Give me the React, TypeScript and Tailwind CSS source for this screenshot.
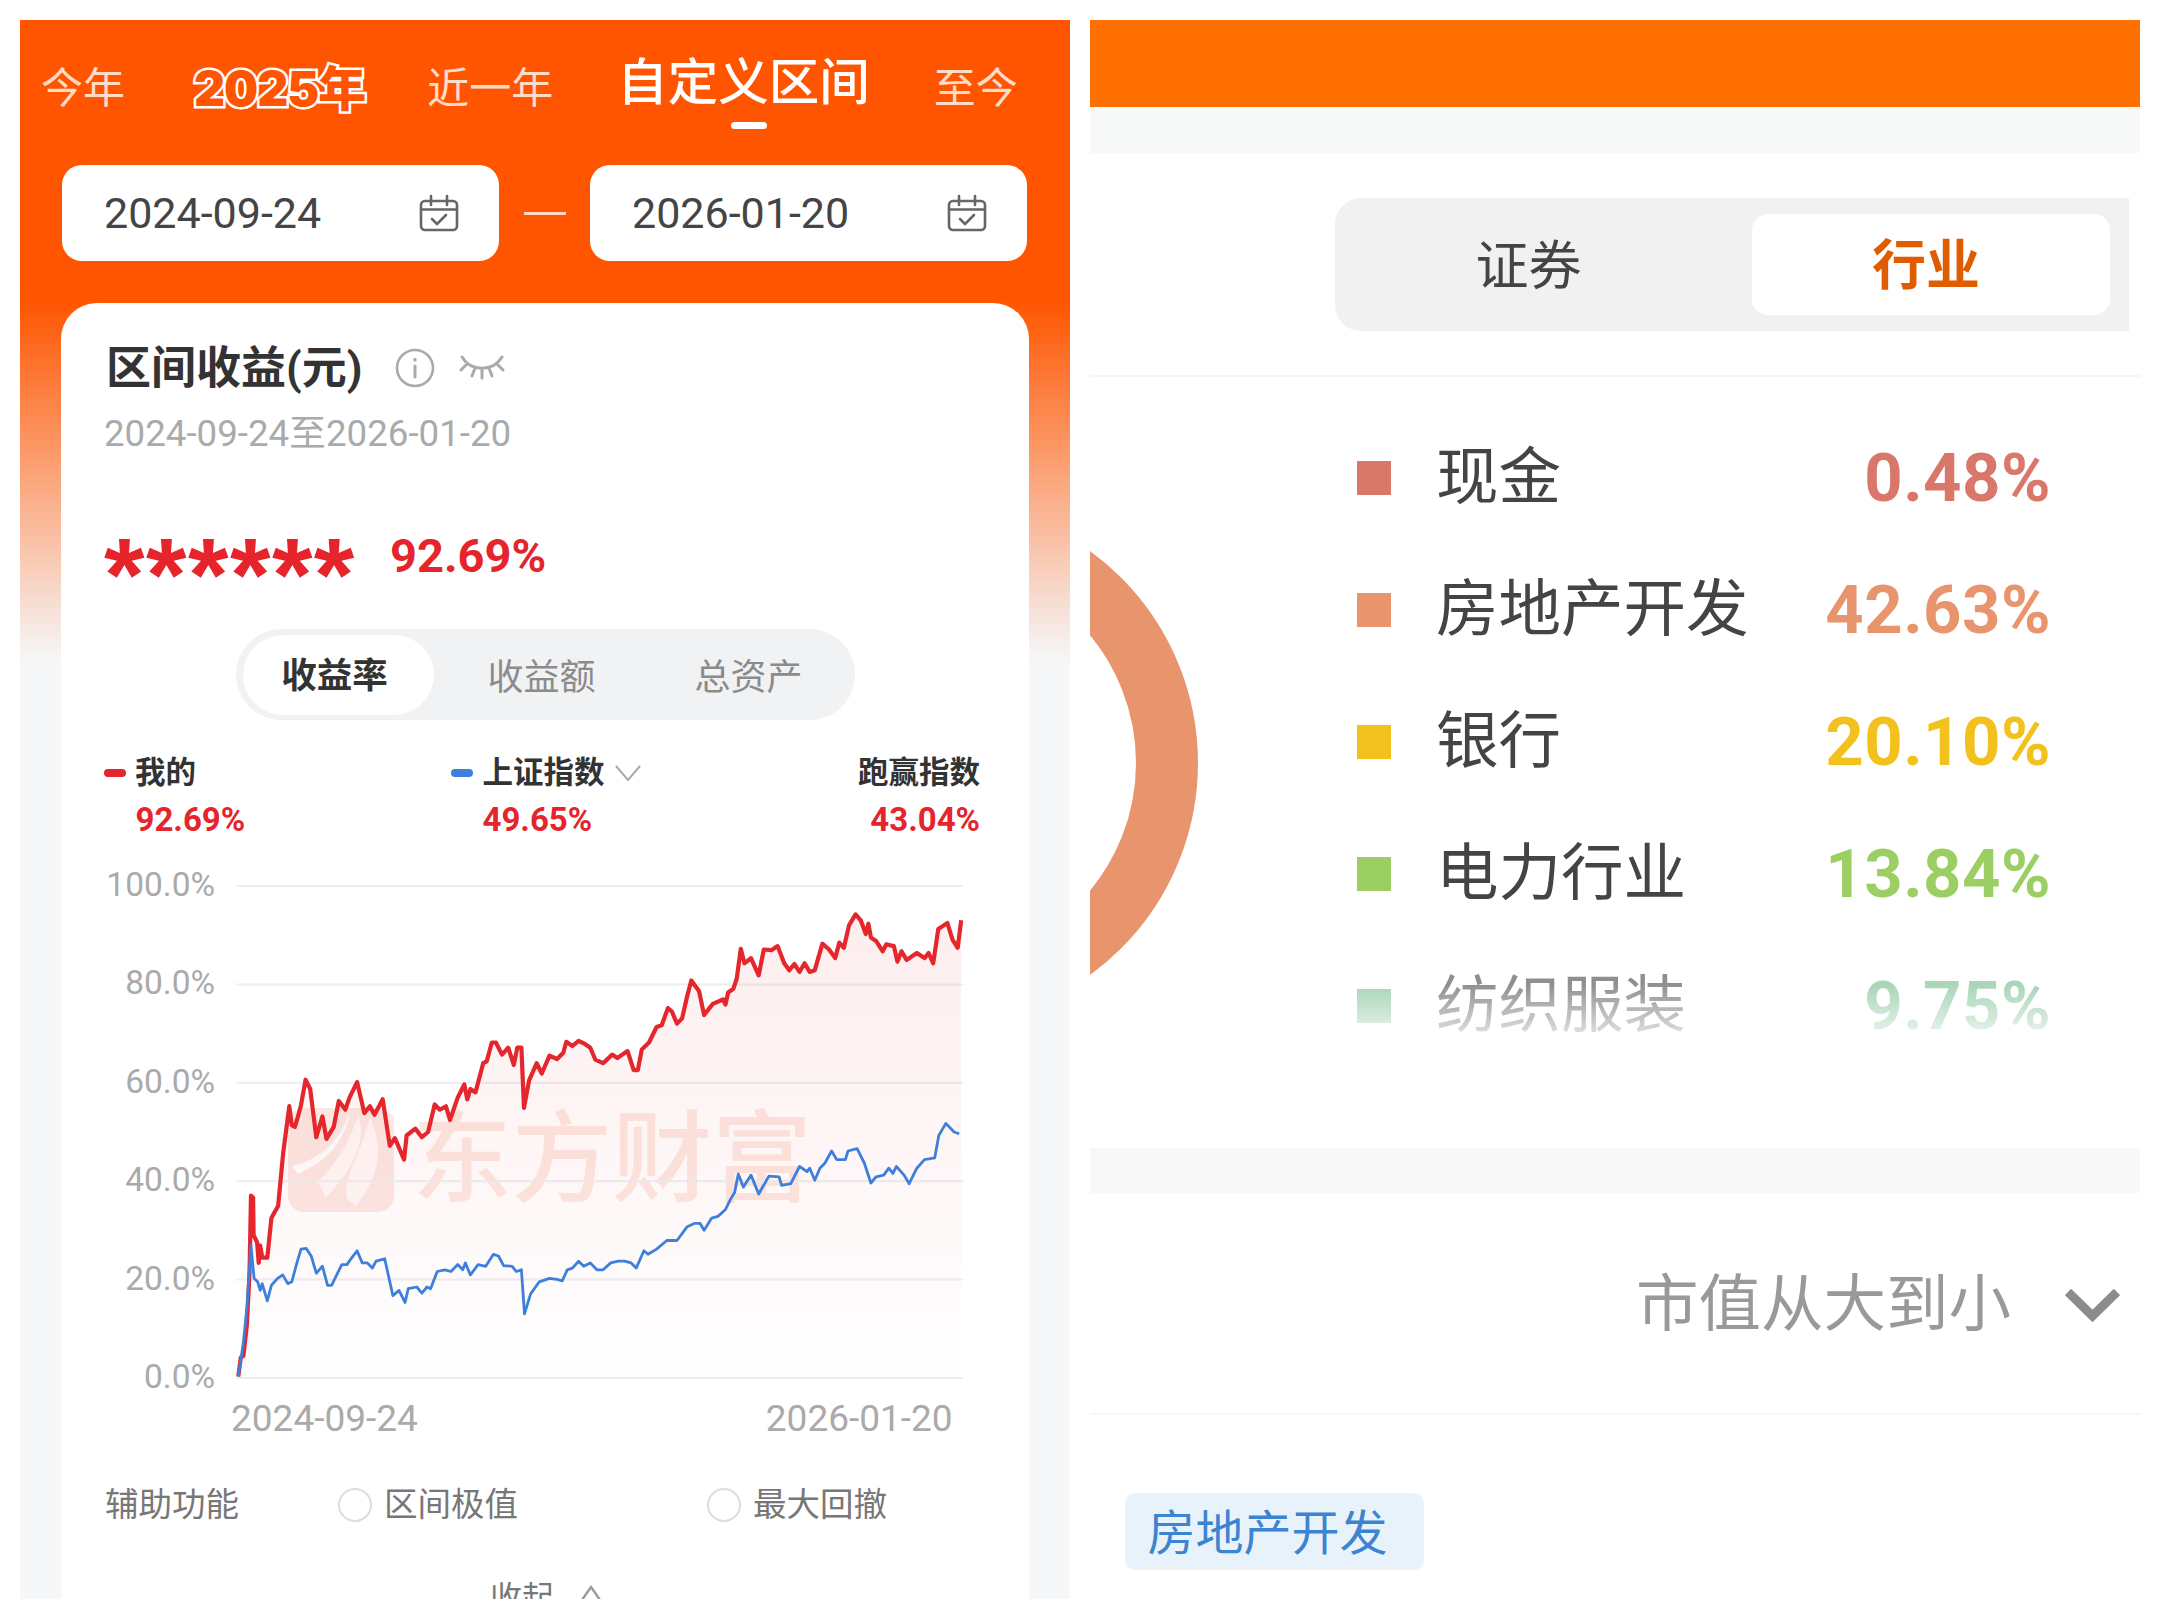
const redTrace = [
  [75,1500],[80,1445],[85,1440],[92,1350],[97,1200],[100,975],[104,980],[105,1090],[112,1110],[115,1170],[118,1120],[122,1155],[132,1155],[140,1040],[153,1005],[163,850],[175,715],[180,770],[186,775],[192,745],[198,712],[207,638],[216,665],[228,805],[240,745],[248,810],[262,775],[272,700],[285,725],[293,690],[308,645],[322,735],[333,715],[342,740],[358,695],[372,830],[382,808],[400,870],[405,800],[422,780],[435,805],[447,790],[460,710],[470,725],[482,715],[490,755],[505,690],[518,652],[524,695],[530,665],[540,675],[555,590],[562,585],[572,530],[580,530],[592,565],[604,545],[615,595],[622,545],[630,545],[635,720],[645,640],[660,590],[670,620],[685,568],[700,578],[712,560],[718,528],[730,540],[742,525],[755,535],[765,545],[775,580],[790,590],[808,565],[818,575],[838,555],[850,610],[858,610],[866,550],[880,530],[895,485],[905,480],[917,430],[925,440],[935,475],[945,460],[955,395],[963,350],[978,380],[988,450],[1005,418],[1025,405],[1030,420],[1035,385],[1045,375],[1052,345],[1060,258],[1067,300],[1080,285],[1095,335],[1105,260],[1120,262],[1132,250],[1145,300],[1155,320],[1165,302],[1175,325],[1185,300],[1195,325],[1205,320],[1220,243],[1233,260],[1245,285],[1253,240],[1262,255],[1272,190],[1285,158],[1295,175],[1305,215],[1310,185],[1315,225],[1325,235],[1338,265],[1345,245],[1360,250],[1367,295],[1375,265],[1385,290],[1405,270],[1420,285],[1428,270],[1437,300],[1447,200],[1465,183],[1475,232],[1485,255],[1492,175],
];

const blueTrace = [
  [75,1500],[85,1400],[92,1300],[100,1120],[106,1215],[113,1225],[118,1250],[122,1230],[132,1280],[140,1235],[152,1215],[162,1205],[172,1230],[180,1225],[190,1170],[198,1130],[208,1128],[218,1150],[228,1200],[240,1180],[250,1235],[258,1235],[268,1205],[278,1175],[288,1175],[295,1160],[308,1135],[318,1170],[328,1170],[338,1185],[345,1165],[362,1158],[378,1265],[390,1250],[402,1285],[408,1245],[425,1240],[435,1258],[445,1240],[452,1245],[465,1195],[480,1190],[492,1195],[505,1175],[515,1190],[520,1170],[530,1205],[545,1175],[560,1180],[575,1145],[585,1150],[595,1178],[612,1180],[620,1195],[630,1190],[636,1318],[648,1260],[665,1225],[685,1215],[700,1218],[710,1222],[720,1190],[730,1185],[742,1165],[752,1180],[765,1170],[778,1190],[790,1190],[805,1170],[820,1165],[832,1165],[845,1170],[855,1185],[870,1135],[878,1145],[895,1130],[915,1105],[935,1105],[955,1065],[970,1055],[980,1055],[988,1075],[1003,1040],[1015,1035],[1030,1015],[1040,985],[1048,965],[1055,912],[1065,950],[1080,915],[1095,970],[1115,918],[1135,920],[1140,945],[1158,940],[1175,890],[1190,905],[1195,895],[1205,930],[1215,895],[1225,880],[1238,845],[1248,870],[1265,870],[1270,845],[1288,838],[1302,880],[1315,938],[1325,920],[1340,915],[1350,895],[1358,910],[1365,890],[1380,915],[1390,940],[1405,895],[1420,870],[1440,865],[1448,800],[1462,765],[1478,790],[1488,795],
];

// traces were read off a stretched crop, so map them back to chart pixels
const toChart = (t: number[][]) =>
  t.map(([x, y]) => [(x / 1.96 - 36).toFixed(1), (y / 2.904 - 3).toFixed(1)].join(","));

const redPoints = toChart(redTrace);
const bluePoints = toChart(blueTrace);
const gridLines = [23, 121.4, 219.8, 318.2, 416.6, 515];
const axisLabels = ["100.0%", "80.0%", "60.0%", "40.0%", "20.0%", "0.0%"];

const sectors = [
  { name: "现金", value: "0.48%", square: "bg-[#d9776a]", text: "text-[#d9776a]" },
  { name: "房地产开发", value: "42.63%", square: "bg-[#e8956d]", text: "text-[#e8956d]" },
  { name: "银行", value: "20.10%", square: "bg-[#f2c11d]", text: "text-[#f2c11d]" },
  { name: "电力行业", value: "13.84%", square: "bg-[#9ccf63]", text: "text-[#9ccf63]" },
];

function CalendarIcon() {
  return (
    <svg width="40" height="38" viewBox="0 0 40 38" fill="none" stroke="#666" strokeWidth="2.6" strokeLinecap="round" strokeLinejoin="round">
      <rect x="2" y="7" width="36" height="29" rx="4" />
      <path d="M2 15.5h36M12 2v9M28 2v9M13 25l5 5 9-9" />
    </svg>
  );
}

function DateBox({ date }: { date: string }) {
  return (
    <div className="flex h-[96px] w-[437px] items-center justify-between rounded-[20px] bg-white pl-[42px] pr-[40px]">
      <span className="text-[43px] leading-none text-[#444]">{date}</span>
      <CalendarIcon />
    </div>
  );
}

function InfoIcon() {
  return (
    <svg width="40" height="40" viewBox="0 0 40 40" fill="none" stroke="#aaa" strokeWidth="2.6" strokeLinecap="round">
      <circle cx="20" cy="20" r="18" />
      <path d="M20 18v11" strokeWidth="3" />
      <path d="M20 11.500v.5" strokeWidth="3.4" />
    </svg>
  );
}

function EyeClosedIcon() {
  return (
    <svg width="48" height="28" viewBox="0 0 48 28" fill="none" stroke="#aaa" strokeWidth="3" strokeLinecap="round">
      <path d="M4 3c9 15 31 15 40 0M9 10l-6 6M17 14l-3 8M24 16v8M31 14l3 8M39 10l6 6" />
    </svg>
  );
}

function Radio() {
  return <span className="block h-[34px] w-[34px] shrink-0 rounded-full border-2 border-[#ddd] bg-white" />;
}

function PriceChart() {
  return (
    <div className="relative ml-[21px] h-[532px] w-[729px]">
      {/* watermark sits under the lines */}
      <div className="absolute left-[52px] top-[245px] flex items-center gap-[18px]">
        <svg width="106" height="104" viewBox="0 0 106 104">
          <rect width="106" height="104" rx="16" fill="#fbe8e3" />
          <path d="M4 58C30 52 52 36 62 2c-4 28-18 48-52 64z" fill="#fff" />
          <path d="M30 74c16-16 32-38 40-68 10 26-6 56-32 84z" fill="#fff" opacity="0.75" />
          <path d="M60 92c-8-16 10-38 22-82 16 34 6 62-14 88z" fill="#fff" opacity="0.75" />
        </svg>
        <span className="whitespace-nowrap text-[100px] font-medium leading-none text-[#fce8e1]">东方财富</span>
      </div>
      <svg className="relative block" width="729" height="532" viewBox="0 0 729 532" fill="none">
        <defs>
          <linearGradient id="areaFill" x1="0" y1="0" x2="0" y2="1">
            <stop offset="0" stopColor="#e8262b" stopOpacity="0.08" />
            <stop offset="1" stopColor="#e8262b" stopOpacity="0.004" />
          </linearGradient>
        </defs>
        {gridLines.map((y) => (
          <line key={y} x1="0" x2="727" y1={y} y2={y} stroke="#edeef1" strokeWidth="2" />
        ))}
        <polygon points={`${redPoints.join(" ")} 725,515 2,515`} fill="url(#areaFill)" />
        <polyline points={redPoints.join(" ")} stroke="#e5262c" strokeWidth="4.2" strokeLinejoin="round" />
        <polyline points={bluePoints.join(" ")} stroke="#3f7fdc" strokeWidth="2.8" strokeLinejoin="round" />
      </svg>
    </div>
  );
}

function ReturnPanel() {
  return (
    <section className="flex h-[1579px] w-[1050px] flex-col overflow-hidden bg-[linear-gradient(#ff5500_0,#ff5500_280px,#f6f7f9_640px)]">
      <div className="mt-[33px] flex h-[72px] items-start whitespace-nowrap pl-[21px] text-[42px] leading-[72px] text-[#ffdcc8]">
        <span>今年</span>
        <span className="ml-[69px] text-[48px] font-black tracking-[-1px] text-[#ff5500] [-webkit-text-stroke:5px_white] [font-family:Inter,'Noto_Sans_CJK_SC',sans-serif] [paint-order:stroke_fill]">
          2025年
        </span>
        <span className="ml-[62px]">近一年</span>
        <div className="ml-[64px] flex flex-col items-center">
          <span className="text-[50.500px] font-medium leading-[60px] text-white">自定义区间</span>
          <span className="ml-[12px] mt-[9px] h-[7px] w-[36px] rounded-full bg-white" />
        </div>
        <span className="ml-[64px]">至今</span>
      </div>

      <div className="ml-[42px] mr-[43px] mt-[40px] flex items-center justify-between">
        <DateBox date="2024-09-24" />
        <span className="h-[3px] w-[42px] bg-[#ffd9c6]" />
        <DateBox date="2026-01-20" />
      </div>

      <div className="mx-[41px] mt-[42px] flex flex-1 flex-col rounded-t-[36px] bg-white">
        <div className="ml-[45px] mt-[37px] flex h-[56px] items-center">
          <span className="text-[45px] font-bold leading-none text-[#333]">区间收益(元)</span>
          <span className="ml-[32px]"><InfoIcon /></span>
          <span className="ml-[23px]"><EyeClosedIcon /></span>
        </div>
        <div className="ml-[43px] mt-[16px] text-[36.7px] leading-[44px] text-[#aaa]">2024-09-24至2026-01-20</div>

        <div className="ml-[43px] mt-[67px] flex h-[60px] items-center text-[#e5252b]">
          <span className="h-[44px] w-[251px] text-[104px] font-bold leading-[88px] tracking-[1.5px] [font-family:'Liberation_Sans',sans-serif]">
            ******
          </span>
          <span className="ml-[35px] pt-[4px] text-[47px] font-bold leading-none">92.69%</span>
        </div>

        <div className="mt-[46px] flex h-[91px] w-[619px] items-center self-center rounded-full bg-[#f1f2f4] pl-[7px] text-[36px] text-[#8b8b8b]">
          <span className="flex h-[80px] w-[191px] items-center justify-center rounded-full bg-white pr-[7px] pt-[4px] text-[35.5px] font-bold text-[#333]">
            收益率
          </span>
          <span className="ml-[54px] pt-[6px]">收益额</span>
          <span className="ml-[99px] pt-[6px]">总资产</span>
        </div>

        <div className="ml-[43px] mr-[49px] mt-[30px] flex text-[30.5px] font-bold leading-[46px] text-[#333]">
          <div className="w-[346.5px]">
            <div className="flex items-center gap-[9px]">
              <span className="h-[8px] w-[22px] rounded-full bg-[#e5252b]" />
              我的
            </div>
            <div className="mt-[1px] pl-[31.5px] text-[33px] text-[#e5252b]">92.69%</div>
          </div>
          <div>
            <div className="flex items-center">
              <span className="mr-[10px] h-[8px] w-[22px] rounded-full bg-[#3f7fdc]" />
              上证指数
              <svg className="ml-[10px]" width="26" height="16" viewBox="0 0 26 16" fill="none" stroke="#aaa" strokeWidth="2">
                <path d="M1 1l12 14L25 1" />
              </svg>
            </div>
            <div className="mt-[1px] pl-[32px] text-[33px] text-[#e5252b]">49.65%</div>
          </div>
          <div className="ml-auto text-right">
            <div>跑赢指数</div>
            <div className="mt-[1px] text-[33px] text-[#e5252b]">43.04%</div>
          </div>
        </div>

        <div className="ml-[45px] mt-[20px] flex items-start">
          <div className="mt-[2px] flex h-[532px] w-[109px] flex-col justify-between text-right text-[33.5px] leading-[40px] text-[#aaa]">
            {axisLabels.map((label) => (
              <span key={label}>{label}</span>
            ))}
          </div>
          <PriceChart />
        </div>

        <div className="ml-[170px] flex text-[37px] leading-[44px] text-[#aaa]">
          <span>2024-09-24</span>
          <span className="ml-[348px]">2026-01-20</span>
        </div>

        <div className="ml-[44px] mt-[41px] flex h-[46px] items-center text-[33.5px] text-[#777]">
          <span>辅助功能</span>
          <span className="ml-[99px]"><Radio /></span>
          <span className="ml-[12px]">区间极值</span>
          <span className="ml-[189px]"><Radio /></span>
          <span className="ml-[12px]">最大回撤</span>
        </div>

        <div className="ml-[429px] mt-[46px] flex h-[48px] items-center text-[32px] text-[#777]">
          <span>收起</span>
          <svg className="ml-[19px]" width="36" height="26" viewBox="0 0 36 26" fill="none" stroke="#999" strokeWidth="2.4">
            <path d="M2 25L18 2l16 23" />
          </svg>
        </div>
      </div>
    </section>
  );
}

function AllocationPanel() {
  return (
    <section className="flex h-[1579px] w-[1050px] flex-col overflow-hidden bg-white">
      <div className="h-[87px] shrink-0 bg-[#ff7000]" />
      <div className="h-[46px] shrink-0 bg-[#f7f8f8]" />

      <div className="ml-[245px] mr-[11px] mt-[45px] flex h-[133px] items-center rounded-l-[26px] bg-[#f1f1f1] pr-[19px]">
        <span className="flex-1 pr-[30px] pt-[5px] text-center text-[53px] leading-none text-[#444]">证券</span>
        <span className="flex h-[101px] w-[358px] items-center justify-center rounded-[16px] bg-white pr-[10px] pt-[4px] text-[54px] font-bold text-[#e05c00]">
          行业
        </span>
      </div>
      <div className="mt-[44px] h-[2px] shrink-0 bg-[#f5f5f5]" />

      <div className="flex h-[771px] shrink-0 items-center">
        <svg className="shrink-0" width="110" height="440" viewBox="0 0 110 440" fill="none">
          <circle cx="-154" cy="220" r="231" stroke="#e8956d" strokeWidth="62" />
        </svg>
        <div className="ml-[157px] w-[694px] self-start pt-[35px]">
          {sectors.map((s) => (
            <div key={s.name} className="flex h-[132px] items-center">
              <span className={`h-[34px] w-[34px] ${s.square}`} />
              <span className="ml-[45px] text-[62.500px] leading-none text-[#444]">{s.name}</span>
              <span className={`ml-auto text-[67px] font-bold leading-none tracking-[0.500px] ${s.text}`}>{s.value}</span>
            </div>
          ))}
          <div className="relative flex h-[132px] items-center">
            <span className="h-[34px] w-[34px] bg-[#a9d5b8]" />
            <span className="ml-[45px] text-[62.500px] leading-none text-[#8f8f8f]">纺织服装</span>
            <span className="ml-auto text-[67px] font-bold leading-none tracking-[0.500px] text-[#a9d5b8]">9.75%</span>
            {/* list fades out at the bottom edge */}
            <div className="absolute inset-x-0 top-[44px] h-[60px] bg-[linear-gradient(rgba(255,255,255,0),rgba(255,255,255,0.85))]" />
          </div>
        </div>
      </div>

      <div className="h-[45px] shrink-0 bg-[#f8f8f8]" />
      <div className="flex h-[220px] shrink-0 items-center justify-end gap-[54px] pr-[20px] pt-[5px]">
        <span className="text-[62.500px] leading-none text-[#999]">市值从大到小</span>
        <svg width="55" height="33" viewBox="0 0 55 33" fill="none" stroke="#8c8c8c" strokeWidth="9">
          <path d="M3 3l24.500 24L52 3" />
        </svg>
      </div>
      <div className="h-[2px] shrink-0 bg-[#f6f6f6]" />

      <div className="ml-[35px] mt-[78px] flex h-[77px] w-[299px] items-center justify-center rounded-[10px] bg-[#e8f2fb] pr-[14px] pt-[4px] text-[48px] text-[#3d84d0]">
        房地产开发
      </div>
    </section>
  );
}

export default function App() {
  return (
    <div lang="zh-CN" className="flex h-[1619px] w-[2160px] gap-[20px] overflow-hidden bg-white pl-[20px] pt-[20px] [font-family:Roboto,'Noto_Sans_CJK_SC',sans-serif]">
      <ReturnPanel />
      <AllocationPanel />
    </div>
  );
}
